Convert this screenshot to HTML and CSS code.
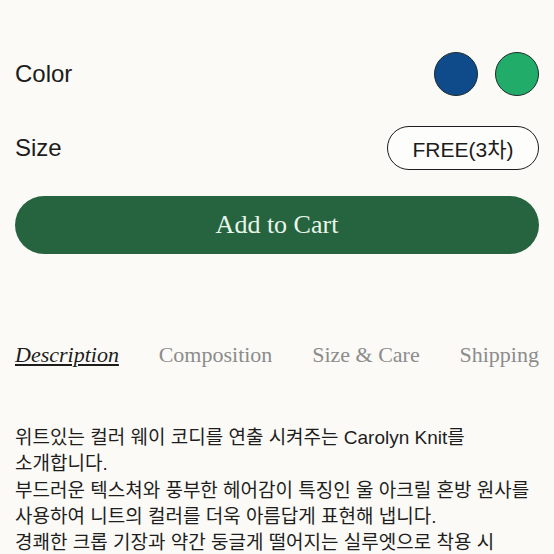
FILE: index.html
```html
<!DOCTYPE html>
<html lang="ko">
<head>
  <meta charset="UTF-8">
  <meta name="viewport" content="width=device-width, initial-scale=1.0">
  <title>Carolyn Knit</title>
  <link rel="stylesheet" href="styles.css">
</head>
<body>
  <div class="product">
    <div class="option-row color-row">
      <span class="option-label">Color</span>
      <div class="swatches">
        <button type="button" class="swatch swatch-blue" aria-label="Blue"></button>
        <button type="button" class="swatch swatch-green" aria-label="Green"></button>
      </div>
    </div>

    <div class="option-row size-row">
      <span class="option-label">Size</span>
      <button type="button" class="size-pill">FREE(3차)</button>
    </div>

    <button type="button" class="cart-button">Add to Cart</button>

    <nav class="tabs">
      <a class="tab active" href="#">Description</a>
      <a class="tab" href="#">Composition</a>
      <a class="tab" href="#">Size &amp; Care</a>
      <a class="tab" href="#">Shipping</a>
    </nav>

    <p class="description">
      위트있는 컬러 웨이 코디를 연출 시켜주는 Carolyn Knit를<br>
      소개합니다.<br>
      부드러운 텍스쳐와 풍부한 헤어감이 특징인 울 아크릴 혼방 원사를<br>
      사용하여 니트의 컬러를 더욱 아름답게 표현해 냅니다.<br>
      경쾌한 크롭 기장과 약간 둥글게 떨어지는 실루엣으로 착용 시
    </p>
  </div>
</body>
</html>
```

FILE: styles.css
```css
body {
  margin: 0;
  background-color: #fbfaf6;
  font-family: "Liberation Sans", "Noto Sans CJK KR", sans-serif;
  color: #1c1c1c;
}
.product {
  padding: 52px 15px 0;
}
.option-row {
  display: flex;
  justify-content: space-between;
  align-items: center;
  height: 44px;
}
.size-row {
  margin-top: 30px;
}
.option-label {
  font-size: 24px;
}
.swatches {
  display: flex;
  gap: 17px;
}
.swatch {
  width: 44px;
  height: 44px;
  padding: 0;
  border: 1.5px solid #1b2b2b;
  border-radius: 50%;
  cursor: pointer;
}
.swatch-blue {
  background-color: #0f4a8b;
}
.swatch-green {
  background-color: #21ac69;
}
.size-pill {
  width: 152px;
  height: 44px;
  padding: 0;
  border: 1.5px solid #1c1c1c;
  border-radius: 22px;
  background-color: #fdfdfb;
  font-family: "Liberation Sans", "Noto Sans CJK KR", sans-serif;
  font-size: 21px;
  color: #1c1c1c;
  cursor: pointer;
}
.cart-button {
  display: block;
  width: 100%;
  height: 58px;
  margin-top: 26px;
  border: none;
  border-radius: 29px;
  background-color: #25643f;
  color: #e9f6ea;
  font-family: "Liberation Serif", serif;
  font-size: 26px;
  cursor: pointer;
}
.tabs {
  display: flex;
  justify-content: space-between;
  margin-top: 86px;
  font-family: "Liberation Serif", serif;
  font-size: 22px;
  line-height: 30px;
}
.tab {
  color: #8c8c8c;
  text-decoration: none;
}
.tab.active {
  color: #1c1c1c;
  font-style: italic;
  text-decoration: underline;
  text-underline-offset: 2px;
}
.description {
  margin: 55px 0 0;
  font-size: 19px;
  line-height: 26.3px;
  color: #1e1e1e;
}
```
